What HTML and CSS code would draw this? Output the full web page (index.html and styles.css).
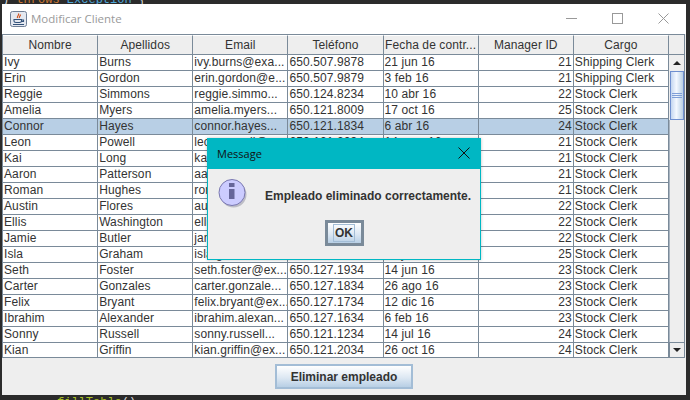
FILE: index.html

```html
<!DOCTYPE html>
<html lang="en">
<head>
  <meta charset="UTF-8" />
  <title>Modificar Cliente</title>
  <link rel="stylesheet" href="styles.css">
</head>
<body>
  <div class="code code-top">) <span class="kw">throws</span> <span class="type">Exception</span> {</div>

  <div class="window">
    <div class="titlebar">
      <svg class="java-icon" width="17" height="16" viewBox="0 0 17 16">
        <rect x="0.5" y="0.5" width="16" height="15" rx="2" fill="#e4e8f0" stroke="#6f7f96"/>
        <path d="M8.500 2.500c1 2-2 2.500-1 4.500M10.500 3.500c0 2-2 2-1 3.500" fill="none" stroke="#d2531f" stroke-width="1.200"/>
        <path d="M4 8.500h7.500v1.500c0 1-1 1.500-2 1.500h-3.500c-1 0-2-.5-2-1.500zM11.500 9h2v1.500h-2M3 13.500h11" fill="none" stroke="#33527a" stroke-width="1.100"/>
      </svg>
      <span class="title">Modificar Cliente</span>
      <div class="winbtns">
        <svg width="11" height="11" viewBox="0 0 11 11"><path d="M0 5.500h11" stroke="#999"/></svg>
        <svg width="11" height="11" viewBox="0 0 11 11"><rect x="0.5" y="0.5" width="10" height="10" fill="none" stroke="#999"/></svg>
        <svg width="11" height="11" viewBox="0 0 11 11"><path d="M0.500 0.500l10 10M10.500 0.500l-10 10" stroke="#999"/></svg>
      </div>
    </div>

    <div class="content">
      <div class="table-wrap">
        <table class="grid">
          <thead>
            <tr>
              <th>Nombre</th><th>Apellidos</th><th>Email</th><th>Teléfono</th><th>Fecha de contr...</th><th>Manager ID</th><th>Cargo</th>
            </tr>
          </thead>
          <tbody>
            <tr><td>Ivy</td><td>Burns</td><td>ivy.burns@exa...</td><td>650.507.9878</td><td>21 jun 16</td><td class="num">21</td><td>Shipping Clerk</td></tr>
            <tr><td>Erin</td><td>Gordon</td><td>erin.gordon@e...</td><td>650.507.9879</td><td>3 feb 16</td><td class="num">21</td><td>Shipping Clerk</td></tr>
            <tr><td>Reggie</td><td>Simmons</td><td>reggie.simmo...</td><td>650.124.8234</td><td>10 abr 16</td><td class="num">22</td><td>Stock Clerk</td></tr>
            <tr><td>Amelia</td><td>Myers</td><td>amelia.myers...</td><td>650.121.8009</td><td>17 oct 16</td><td class="num">25</td><td>Stock Clerk</td></tr>
            <tr class="selected"><td>Connor</td><td>Hayes</td><td>connor.hayes...</td><td>650.121.1834</td><td>6 abr 16</td><td class="num">24</td><td>Stock Clerk</td></tr>
            <tr><td>Leon</td><td>Powell</td><td>leon.powell@...</td><td>650.121.2234</td><td>14 may 16</td><td class="num">21</td><td>Stock Clerk</td></tr>
            <tr><td>Kai</td><td>Long</td><td>kai.long@exa...</td><td>650.121.2034</td><td>14 jul 16</td><td class="num">21</td><td>Stock Clerk</td></tr>
            <tr><td>Aaron</td><td>Patterson</td><td>aaron.patters...</td><td>650.121.2004</td><td>14 jul 16</td><td class="num">21</td><td>Stock Clerk</td></tr>
            <tr><td>Roman</td><td>Hughes</td><td>roman.hughes...</td><td>650.121.8009</td><td>14 jul 16</td><td class="num">21</td><td>Stock Clerk</td></tr>
            <tr><td>Austin</td><td>Flores</td><td>austin.flores...</td><td>650.121.2994</td><td>14 jul 16</td><td class="num">22</td><td>Stock Clerk</td></tr>
            <tr><td>Ellis</td><td>Washington</td><td>ellis.washing...</td><td>650.121.2874</td><td>14 jul 16</td><td class="num">22</td><td>Stock Clerk</td></tr>
            <tr><td>Jamie</td><td>Butler</td><td>jamie.butler...</td><td>650.124.1214</td><td>14 jul 16</td><td class="num">22</td><td>Stock Clerk</td></tr>
            <tr><td>Isla</td><td>Graham</td><td>isla.graham@...</td><td>650.124.1334</td><td>14 jul 16</td><td class="num">25</td><td>Stock Clerk</td></tr>
            <tr><td>Seth</td><td>Foster</td><td>seth.foster@ex...</td><td>650.127.1934</td><td>14 jun 16</td><td class="num">23</td><td>Stock Clerk</td></tr>
            <tr><td>Carter</td><td>Gonzales</td><td>carter.gonzale...</td><td>650.127.1834</td><td>26 ago 16</td><td class="num">23</td><td>Stock Clerk</td></tr>
            <tr><td>Felix</td><td>Bryant</td><td>felix.bryant@ex...</td><td>650.127.1734</td><td>12 dic 16</td><td class="num">23</td><td>Stock Clerk</td></tr>
            <tr><td>Ibrahim</td><td>Alexander</td><td>ibrahim.alexan...</td><td>650.127.1634</td><td>6 feb 16</td><td class="num">23</td><td>Stock Clerk</td></tr>
            <tr><td>Sonny</td><td>Russell</td><td>sonny.russell...</td><td>650.121.1234</td><td>14 jul 16</td><td class="num">24</td><td>Stock Clerk</td></tr>
            <tr><td>Kian</td><td>Griffin</td><td>kian.griffin@ex...</td><td>650.121.2034</td><td>26 oct 16</td><td class="num">24</td><td>Stock Clerk</td></tr>
          </tbody>
        </table>

        <div class="scrollbar">
          <div class="corner"></div>
          <div class="arrow"><svg width="8" height="4" viewBox="0 0 8 4"><path d="M4 0L8 4H0z" fill="#222"/></svg></div>
          <div class="thumb"><span></span><span></span><span></span></div>
          <div class="track"></div>
          <div class="arrow arrow-down"><svg width="8" height="4" viewBox="0 0 8 4"><path d="M0 0h8L4 4z" fill="#222"/></svg></div>
        </div>
      </div>

      <div class="actions">
        <button class="btn-delete">Eliminar empleado</button>
      </div>
    </div>
  </div>

  <div class="code code-bottom"><span class="call">fillTable</span>()</div>

  <div class="dialog">
    <div class="dialog-title">
      <span>Message</span>
      <svg width="12" height="12" viewBox="0 0 12 12"><path d="M0.500 0.500l11 11M11.500 0.500l-11 11" stroke="#111"/></svg>
    </div>
    <div class="dialog-body">
      <div class="dialog-row">
        <svg class="info-icon" width="30" height="31" viewBox="0 0 30 31">
          <circle cx="15.500" cy="16.500" r="13" fill="#bdbdc6"/>
          <circle cx="14" cy="14.500" r="13" fill="#ccccff" stroke="#7a78b0"/>
          <rect x="11" y="5" width="5.500" height="4" fill="#66669a"/>
          <rect x="11" y="11" width="5.500" height="10" fill="#66669a"/>
        </svg>
        <span class="dialog-msg">Empleado eliminado correctamente.</span>
      </div>
      <button class="btn-ok"><span>OK</span></button>
    </div>
  </div>
</body>
</html>
```

FILE: styles.css

```css
body {
  margin: 0;
  height: 400px;
  overflow: hidden;
  background-color: #2b2b2b;
  font-family: "Liberation Sans", Arial, sans-serif;
  font-size: 12px;
  color: #333;
}
.code {
  font-family: "Liberation Mono", monospace;
  font-size: 12px;
  overflow: hidden;
  white-space: pre;
  color: #ddd;
}
.code-top {
  height: 4px;
  padding-left: 2px;
  line-height: 0;
}
.code-top .kw {
  color: #cc7832;
}
.code-top .type {
  color: #4ea6d8;
}
.code-bottom {
  box-sizing: border-box;
  height: 5px;
  padding: 2px 0 0 57px;
  line-height: 12px;
}
.code-bottom .call {
  color: #a8c023;
}
.window {
  margin-left: 2px;
  width: 684px;
  height: 391px;
  background-color: #eeeeee;
  display: flex;
  flex-direction: column;
}
.titlebar {
  height: 30px;
  flex: none;
  background-color: #fff;
  display: flex;
  align-items: center;
  padding-left: 8px;
  padding-bottom: 1px;
  box-sizing: border-box;
}
.java-icon {
  margin-right: 4px;
}
.title {
  font-family: "Open Sans", sans-serif;
  font-size: 11.5px;
  color: #9a9a9a;
}
.winbtns {
  margin-left: auto;
  display: flex;
  gap: 35px;
  padding-right: 17px;
  padding-bottom: 1px;
}
.content {
  flex: 1;
  display: flex;
  flex-direction: column;
}
.table-wrap {
  display: flex;
  margin-right: 1px;
  border: 1px solid #7a8a99;
}
.grid {
  width: 666px;
  table-layout: fixed;
  border-collapse: separate;
  border-spacing: 0;
  letter-spacing: 0.1px;
}
.grid th {
  height: 20px;
  padding: 0;
  font-weight: normal;
  background-color: #eeeeee;
  border-right: 1px solid #7a8a99;
  border-bottom: 1px solid #7a8a99;
  border-top: 1px solid #fff;
  box-sizing: border-box;
  white-space: nowrap;
}
.grid td {
  height: 16px;
  padding: 0 0 0 1px;
  box-sizing: border-box;
  background-color: #fff;
  border-right: 1px solid #7a8a99;
  border-bottom: 1px solid #7a8a99;
  white-space: nowrap;
  overflow: hidden;
  line-height: 15px;
}
.grid tr:last-child td {
  border-bottom: none;
  height: 14px;
  line-height: 14px;
}
.grid td.num {
  text-align: right;
  padding: 0 1px 0 0;
}
.grid .selected td {
  background-color: #b8cfe5;
}
.scrollbar {
  flex: 1;
  display: flex;
  flex-direction: column;
  background-color: #eeeeee;
}
.corner {
  height: 20px;
  flex: none;
  box-sizing: border-box;
  border-bottom: 1px solid #7a8a99;
}
.arrow {
  height: 16px;
  flex: none;
  display: flex;
  align-items: center;
  justify-content: center;
  background-color: #eeeeee;
}
.arrow-down {
  height: 15px;
  box-sizing: border-box;
  border-top: 1px solid #7a8a99;
  border-left: 1px solid #7a8a99;
}
.thumb {
  height: 49px;
  flex: none;
  margin-left: 1px;
  box-sizing: border-box;
  border: 1px solid #6f8fd0;
  background: linear-gradient(to right, #c4d6f0, #f4f8ff 45%, #b8cfe5);
  display: flex;
  flex-direction: column;
  justify-content: center;
  align-items: center;
  gap: 1px;
}
.thumb span {
  width: 10px;
  height: 1px;
  background-color: #7f9fd8;
}
.track {
  flex: 1;
  border-left: 1px solid #a9b5c1;
}
.actions {
  flex: 1;
  display: flex;
  justify-content: center;
  align-items: center;
}
.btn-delete {
  width: 138px;
  height: 25px;
  padding: 0;
  font-family: "Liberation Sans", Arial, sans-serif;
  font-size: 12px;
  font-weight: bold;
  color: #333;
  border: 2px solid #a3bdd6;
  background: linear-gradient(to bottom, #fff, #dde8f3 55%, #b8cfe5);
}
/* message box over the table */
.dialog {
  position: absolute;
  left: 207px;
  top: 138px;
  width: 274px;
  height: 122px;
  box-sizing: border-box;
  border: 1px solid #00b7c3;
  background-color: #eeeeee;
  box-shadow: 0 0 3px rgba(0, 0, 0, 0.25);
  display: flex;
  flex-direction: column;
}
.dialog-title {
  height: 30px;
  flex: none;
  box-sizing: border-box;
  background-color: #00b7c3;
  display: flex;
  align-items: center;
  justify-content: space-between;
  padding: 0 10px 2px 9px;
  font-family: "Open Sans", sans-serif;
  font-size: 11px;
  color: #111;
}
.dialog-body {
  flex: 1;
  display: flex;
  flex-direction: column;
  align-items: center;
}
.dialog-row {
  align-self: stretch;
  display: flex;
  align-items: flex-start;
  height: 51px;
  padding: 9px 0 0 10px;
  box-sizing: border-box;
}
.info-icon {
  flex: none;
  margin-right: 17px;
}
.dialog-msg {
  font-weight: bold;
  white-space: nowrap;
  padding-top: 11px;
}
.btn-ok {
  width: 39px;
  height: 26px;
  padding: 0;
  border: 3px solid #7a8a99;
  background: linear-gradient(to bottom, #fff, #dde8f3 55%, #b8cfe5);
  font-family: "Liberation Sans", Arial, sans-serif;
  font-size: 12px;
  font-weight: bold;
  color: #333;
  display: flex;
  align-items: center;
  justify-content: center;
}
.btn-ok span {
  padding: 1px;
  border: 1px solid #a3bdd6;
  line-height: 14px;
}
```
